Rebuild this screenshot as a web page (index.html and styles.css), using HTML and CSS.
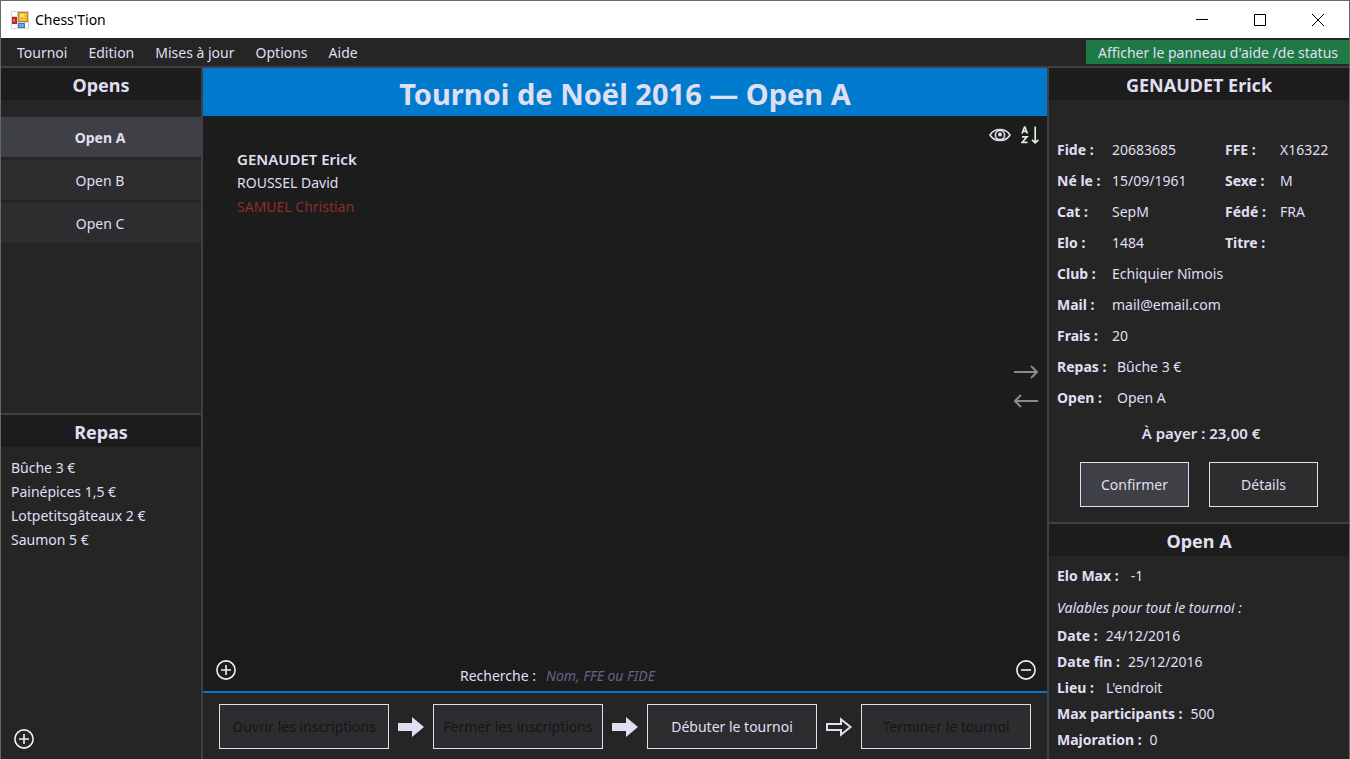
FILE: index.html
```html
<!DOCTYPE html>
<html lang="fr">
<head>
<meta charset="utf-8">
<title>Chess'Tion</title>
<meta name="viewport" content="width=device-width, initial-scale=1">
<link rel="stylesheet" href="styles.css">
</head>
<body>
<div class="window">
  <header class="titlebar">
    <svg class="app-icon" width="18" height="18" viewBox="0 0 18 18" aria-hidden="true">
      <rect width="18" height="18" fill="#d3d4d6"/>
      <rect x="1" y="1" width="5" height="4" fill="#fff"/><rect x="1" y="13" width="5" height="4" fill="#fff"/><rect x="14" y="12" width="3" height="5" fill="#fff"/>
      <rect x="1" y="6" width="5" height="7" fill="#b02a2a"/><rect x="2" y="8" width="2" height="3" fill="#e07070"/>
      <rect x="7" y="1" width="10" height="10" fill="#b98410"/><rect x="8" y="2" width="8" height="8" fill="#f2c032"/><rect x="9" y="3" width="4" height="3" fill="#fbe08a"/>
      <rect x="7" y="12" width="7" height="5" fill="#3e74d0"/><rect x="8" y="13" width="5" height="3" fill="#74a4ee"/>
    </svg>
    <span class="app-name">Chess'Tion</span>
    <div class="win-controls">
      <button type="button" aria-label="Réduire"><svg width="12" height="12" viewBox="0 0 12 12"><path d="M0 5.500h12" class="ctl"/></svg></button>
      <button type="button" aria-label="Agrandir"><svg width="12" height="12" viewBox="0 0 12 12"><path d="M.5.5h11v11H.5z" class="ctl"/></svg></button>
      <button type="button" aria-label="Fermer"><svg width="12" height="12" viewBox="0 0 12 12"><path d="M0 0l12 12M12 0L0 12" class="ctl"/></svg></button>
    </div>
  </header>

  <nav class="menubar">
    <button type="button">Tournoi</button>
    <button type="button">Edition</button>
    <button type="button">Mises à jour</button>
    <button type="button">Options</button>
    <button type="button">Aide</button>
    <button type="button" class="help-toggle">Afficher le panneau d'aide /de status</button>
  </nav>

  <div class="workspace">
    <aside class="column left">
      <section class="panel">
        <h2>Opens</h2>
        <div class="opens">
          <button type="button" class="selected">Open A</button>
          <button type="button">Open B</button>
          <button type="button">Open C</button>
        </div>
      </section>
      <section class="panel">
        <h2>Repas</h2>
        <ul class="lines meals">
          <li>Bûche 3 €</li>
          <li>Painépices 1,5 €</li>
          <li>Lotpetitsgâteaux 2 €</li>
          <li>Saumon 5 €</li>
        </ul>
        <div class="panel-foot">
          <button type="button" class="icon-btn" aria-label="Ajouter un repas"><svg width="20" height="20" viewBox="0 0 20 20"><circle cx="10" cy="10" r="9.100" class="ring"/><path d="M10 5v10M5 10h10" class="ring"/></svg></button>
        </div>
      </section>
    </aside>

    <main class="center">
      <h1>Tournoi de Noël 2016 — Open A</h1>
      <div class="players">
        <ul class="lines">
          <li class="strong">GENAUDET Erick</li>
          <li>ROUSSEL David</li>
          <li class="absent">SAMUEL Christian</li>
        </ul>
        <div class="tools">
          <div class="tool-row">
            <button type="button" class="icon-btn" aria-label="Afficher"><svg width="22" height="14" viewBox="0 0 22 14"><path d="M1 7C5.500-.300 16.500-.300 21 7C16.500 14.300 5.500 14.300 1 7Z" class="eye"/><circle cx="11" cy="7" r="4.600" class="eye"/><circle cx="11" cy="6.500" r="2" fill="#e0dff2"/></svg></button>
            <button type="button" class="icon-btn" aria-label="Trier de A à Z"><svg width="18" height="18" viewBox="0 0 18 18"><path d="M1 7.500L3.500 1h.4L6.400 7.500M2 5.300h3.500M1 10.800h5L1.200 16.300H6.500" class="sort"/><path d="M14.200.500V17M11 13.800l3.200 3 3.200-3" class="sort"/></svg></button>
          </div>
          <div class="moves">
            <button type="button" class="icon-btn" aria-label="Vers la droite"><svg width="24" height="14" viewBox="0 0 24 14"><path d="M0 7h23M17 1l6 6-6 6" class="move"/></svg></button>
            <button type="button" class="icon-btn" aria-label="Vers la gauche"><svg width="24" height="14" viewBox="0 0 24 14"><path d="M24 7H1M7 1L1 7l6 6" class="move"/></svg></button>
          </div>
        </div>
      </div>
      <div class="search-row">
        <button type="button" class="icon-btn" aria-label="Ajouter un joueur"><svg width="20" height="20" viewBox="0 0 20 20"><circle cx="10" cy="10" r="9.100" class="ring"/><path d="M10 5v10M5 10h10" class="ring"/></svg></button>
        <div class="search">
          <label for="search">Recherche :</label>
          <input id="search" type="text" placeholder="Nom, FFE ou FIDE">
        </div>
        <button type="button" class="icon-btn" aria-label="Retirer un joueur"><svg width="20" height="20" viewBox="0 0 20 20"><circle cx="10" cy="10" r="9.100" class="ring"/><path d="M5 10h10" class="ring"/></svg></button>
      </div>
      <footer class="steps">
        <button type="button" class="btn" disabled>Ouvrir les inscriptions</button>
        <svg width="28" height="20" viewBox="0 0 28 20" aria-hidden="true"><path d="M1 6h14V0l12 10-12 10v-6H1z" fill="#e0dff2"/></svg>
        <button type="button" class="btn" disabled>Fermer les inscriptions</button>
        <svg width="28" height="20" viewBox="0 0 28 20" aria-hidden="true"><path d="M1 6h14V0l12 10-12 10v-6H1z" fill="#e0dff2"/></svg>
        <button type="button" class="btn">Débuter le tournoi</button>
        <svg width="28" height="20" viewBox="0 0 28 20" aria-hidden="true"><path d="M2 7h14V2.300L25.500 10 16 17.700V13H2z" class="outline"/></svg>
        <button type="button" class="btn" disabled>Terminer le tournoi</button>
      </footer>
    </main>

    <aside class="column right">
      <section class="panel">
        <h2>GENAUDET Erick</h2>
        <dl class="details">
          <dt>Fide :</dt><dd>20683685</dd><dt>FFE :</dt><dd>X16322</dd>
          <dt>Né le :</dt><dd>15/09/1961</dd><dt>Sexe :</dt><dd>M</dd>
          <dt>Cat :</dt><dd>SepM</dd><dt>Fédé :</dt><dd>FRA</dd>
          <dt>Elo :</dt><dd>1484</dd><dt>Titre :</dt><dd></dd>
          <dt>Club :</dt><dd class="wide">Echiquier Nîmois</dd>
          <dt>Mail :</dt><dd class="wide">mail@email.com</dd>
          <dt>Frais :</dt><dd class="wide">20</dd>
          <dt>Repas :</dt><dd class="wide inset">Bûche 3 €</dd>
          <dt>Open :</dt><dd class="wide inset">Open A</dd>
        </dl>
        <p class="total">À payer : 23,00 €</p>
        <div class="actions">
          <button type="button" class="btn primary">Confirmer</button>
          <button type="button" class="btn">Détails</button>
        </div>
      </section>
      <section class="panel">
        <h2>Open A</h2>
        <dl class="settings">
          <div class="first"><dt>Elo Max :</dt><dd>-1</dd></div>
          <div class="note">Valables pour tout le tournoi :</div>
          <div><dt>Date :</dt><dd>24/12/2016</dd></div>
          <div><dt>Date fin :</dt><dd>25/12/2016</dd></div>
          <div class="spaced"><dt>Lieu :</dt><dd>L'endroit</dd></div>
          <div><dt>Max participants :</dt><dd>500</dd></div>
          <div><dt>Majoration :</dt><dd>0</dd></div>
        </dl>
      </section>
    </aside>
  </div>
</div>
</body>
</html>
```
FILE: styles.css
```css
* { box-sizing: border-box; }

body, h1, h2, p, ul, dl, dd { margin: 0; padding: 0; }
ul { list-style: none; }

body {
  background: #252526;
  color: #e0dff2;
  font: 14px/24px "Noto Sans", "Open Sans", sans-serif;
}

button, input { font: inherit; color: inherit; }
button { margin: 0; padding: 0; border: 0; background: none; white-space: nowrap; }
svg { display: block; flex: none; fill: none; }

.window {
  display: flex;
  flex-direction: column;
  min-height: 100vh;
  border: 1px solid #606b62;
  border-bottom: 0;
}

.titlebar {
  display: flex;
  align-items: center;
  height: 37px;
  padding: 0 2px 0 10px;
  background: #fff;
  color: #000;
}
.app-name { margin-left: 6px; }
.win-controls { display: flex; margin-left: auto; align-self: stretch; }
.win-controls button { display: grid; place-items: center; width: 58px; }
.ctl { stroke: #000; stroke-width: 1; }

.menubar {
  display: flex;
  align-items: center;
  gap: 21px;
  height: 28px;
  padding-left: 16px;
}
.menubar button { height: 24px; padding-top: 2px; line-height: 22px; }
.menubar .help-toggle { margin-left: auto; padding: 2px 11px 0 12px; background: #1e7a45; }

.workspace {
  flex: 1;
  display: grid;
  grid-template-columns: 200px 1fr 300px;
  gap: 2px;
  padding-top: 2px;
  background: #3f3f46;
}

.column { display: grid; gap: 2px; }
.left { grid-template-rows: 345px 1fr; }
.right { grid-template-rows: auto 1fr; }
.panel { display: flex; flex-direction: column; background: #252526; }

h2 {
  height: 32px;
  background: #1c1c1c;
  font-size: 18px;
  line-height: 34px;
  font-weight: 700;
  text-align: center;
}

.opens { display: grid; gap: 3px; padding-top: 17px; }
.opens button { height: 40px; padding: 2px 2px 0 0; background: #2d2d30; }
.opens .selected { background: #3f3f46; font-weight: 700; }
dt { font-weight: 700; }
.strong, .total { font-size: 15px; font-weight: 600; }

.meals { padding: 9px 10px; }
.panel-foot { display: flex; margin-top: auto; padding: 0 13px 10px; }

.center { display: flex; flex-direction: column; background: #1c1c1c; }
h1 {
  height: 48px;
  background: #007acc;
  font-size: 29px;
  line-height: 52px;
  font-weight: 700;
  text-align: center;
}

.players { flex: 1; display: flex; justify-content: space-between; padding: 10px 8px 0 34px; }
.players .lines { padding-top: 21px; }
.absent { color: #8f2d2d; }
.tools { display: flex; flex-direction: column; align-items: flex-end; }
.tool-row { display: flex; align-items: center; gap: 10px; }
.moves { display: grid; gap: 15px; margin-top: 221px; padding-right: 1px; }

.eye { stroke: #e0dff2; stroke-width: 1.6; }
.sort { stroke: #dcefd8; stroke-width: 1.7; }
.move { stroke: #8a8a8a; stroke-width: 2; }
.ring { stroke: #f0f0f0; stroke-width: 1.6; }
.outline { stroke: #e0dff2; stroke-width: 2; }

.search-row {
  display: flex;
  align-items: flex-start;
  justify-content: space-between;
  padding: 0 11px 3px 13px;
  border-bottom: 2px solid #007acc;
}
.search { display: flex; gap: 10px; padding-top: 4px; }
.search input {
  width: 246px;
  height: 24px;
  padding: 0;
  border: 0;
  background: none;
  outline: none;
}
.search input::placeholder { color: #65638a; opacity: 1; font-style: italic; }

.steps {
  display: flex;
  align-items: center;
  justify-content: space-between;
  height: 66px;
  padding: 1px 16px 0;
  background: #252526;
}
.btn { height: 45px; border: 1px solid #e0dff2; background: #2d2d30; }
.btn:disabled { color: #151517; }
.steps .btn { width: 170px; }

.details {
  display: grid;
  grid-template-columns: 55px 113px 55px 1fr;
  grid-auto-rows: 31px;
  padding: 34px 8px 0;
  line-height: 31px;
}
.wide { grid-column: span 3; }
.inset { padding-left: 5px; }
.total { padding: 8px 0 0 4px; text-align: center; }
.actions { display: flex; justify-content: center; gap: 20px; padding: 17px 0 15px; }
.actions .btn { width: 109px; }
.btn.primary { background: #3f3f46; }

.settings { padding: 8px 8px 0; }
.settings div { display: flex; gap: 8px; height: 26px; }
.settings .first { gap: 12px; height: 32px; }
.settings .note { height: 28px; font-style: italic; }
.settings .spaced { gap: 12px; }
```
